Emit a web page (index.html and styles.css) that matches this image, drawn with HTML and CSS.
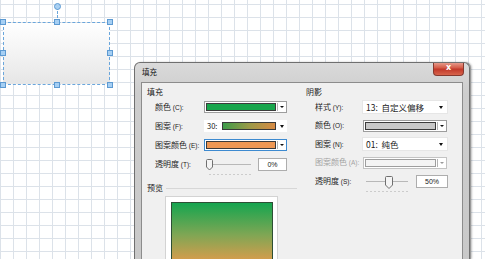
FILE: index.html
```html
<!DOCTYPE html>
<html>
<head>
<meta charset="utf-8">
<link rel="stylesheet" href="styles.css">
</head>
<body>
<div class="shape">
  <div class="rot-line"></div>
  <div class="rot"></div>
  <i class="h h-tl"></i><i class="h h-tm"></i><i class="h h-tr"></i>
  <i class="h h-ml"></i><i class="h h-mr"></i>
  <i class="h h-bl"></i><i class="h h-bm"></i><i class="h h-br"></i>
</div>

<div class="dialog">
  <div class="titlebar">
    <span class="title">填充</span>
    <div class="close">x</div>
  </div>
  <div class="client">
    <div class="col col-left">
      <div class="group">填充</div>
      <div class="rows rows-left">
        <div class="lab">颜色 <span class="key">(C):</span></div>
        <div class="cs"><div class="sw sw-green"></div><div class="dd"><i class="tri"></i></div></div>

        <div class="lab">图案 <span class="key">(F):</span></div>
        <div class="cp"><span class="num">30:</span><div class="sw sw-grad"></div><div class="dd2"><i class="tri"></i></div></div>

        <div class="lab">图案颜色 <span class="key">(E):</span></div>
        <div class="cs focus"><div class="sw sw-orange"></div><div class="dd"><i class="tri"></i></div></div>

        <div class="lab">透明度 <span class="key">(T):</span></div>
        <div class="slide-row">
          <svg class="slider" width="46" height="17" viewBox="0 0 46 17">
            <line x1="3" y1="5.5" x2="45" y2="5.5" stroke="#b8b8b8" stroke-width="1"/>
            <path d="M0.5 1.5 Q0.5 0.5 1.5 0.5 H5.5 Q6.5 0.5 6.5 1.5 V8 L3.5 11 L0.5 8 Z" fill="#f4f4f4" stroke="#6f6f6f"/>
            <path d="M3.5 15.5 H45" stroke="#a8a8a8" stroke-dasharray="1 3"/>
          </svg>
          <div class="tb">0%</div>
        </div>
      </div>
      <div class="sect"><span>预览</span><div class="rule"></div></div>
      <div class="preview"><div class="pv"></div></div>
    </div>

    <div class="col col-right">
      <div class="group">阴影</div>
      <div class="rows rows-right">
        <div class="lab">样式 <span class="key">(Y):</span></div>
        <div class="ct"><span>13:&nbsp; 自定义偏移</span><i class="tri"></i></div>

        <div class="lab">颜色 <span class="key">(O):</span></div>
        <div class="cs inset"><div class="sw sw-gray"></div><div class="dd"><i class="tri"></i></div></div>

        <div class="lab">图案 <span class="key">(N):</span></div>
        <div class="ct"><span>01:&nbsp; 纯色</span><i class="tri"></i></div>

        <div class="lab dis">图案颜色 <span class="key">(A):</span></div>
        <div class="cs inset disabled"><div class="sw sw-dis"></div><div class="dd"><i class="tri"></i></div></div>

        <div class="lab">透明度 <span class="key">(S):</span></div>
        <div class="slide-row">
          <svg class="slider" width="48" height="19" viewBox="0 0 48 19">
            <line x1="4" y1="5.5" x2="46" y2="5.5" stroke="#b8b8b8" stroke-width="1"/>
            <path d="M23.5 1.5 Q23.5 0.5 24.5 0.5 H29.5 Q30.5 0.5 30.5 1.5 V9 L27 12.5 L23.5 9 Z" fill="#f4f4f4" stroke="#6f6f6f"/>
            <path d="M4.5 15.5 H46" stroke="#a8a8a8" stroke-dasharray="1 3"/>
          </svg>
          <div class="tb">50%</div>
        </div>
      </div>
    </div>
  </div>
</div>
</body>
</html>
```
FILE: styles.css
```css
html, body {
  margin: 0;
  padding: 0;
}
body {
  width: 485px;
  height: 259px;
  overflow: hidden;
  position: relative;
  font-family: "Noto Sans CJK SC", "Noto Sans", sans-serif;
  font-size: 8px;
  color: #1a1a1a;
  background-color: #ffffff;
  background-image:
    linear-gradient(to right, #dce2e9 1px, transparent 1px),
    linear-gradient(to bottom, #dce2e9 1px, transparent 1px);
  background-size: 13px 13px;
  background-position: 0 4px;
}

/* ---------- shape on canvas ---------- */
.shape {
  position: absolute;
  left: 3px;
  top: 22px;
  width: 107px;
  height: 63px;
  box-sizing: border-box;
  border: 1px dashed #6aa6dc;
  background: linear-gradient(#ffffff, #f3f3f3 50%, #e6e6e6);
}
.rot-line {
  position: absolute;
  left: 53px;
  top: -16px;
  height: 15px;
  border-left: 1px dashed #6aa6dc;
}
.rot {
  position: absolute;
  left: 50px;
  top: -20px;
  width: 5px;
  height: 5px;
  border-radius: 50%;
  background: #a9d0f2;
  border: 1px solid #5e9bd3;
}
.h {
  position: absolute;
  width: 4px;
  height: 4px;
  background: #a6cff3;
  border: 1px solid #5d9ad2;
}
.h-tl { left: -4px; top: -4px; }
.h-tm { left: 50px; top: -4px; }
.h-tr { right: -4px; top: -4px; }
.h-ml { left: -4px; top: 27px; }
.h-mr { right: -4px; top: 27px; }
.h-bl { left: -4px; bottom: -4px; }
.h-bm { left: 50px; bottom: -4px; }
.h-br { right: -4px; bottom: -4px; }

/* ---------- dialog window ---------- */
.dialog {
  position: absolute;
  left: 134px;
  top: 62px;
  width: 336px;
  height: 197px;
  box-sizing: border-box;
  border: 1px solid #6f6f6f;
  border-bottom: none;
  border-radius: 6px 6px 0 0;
  background: linear-gradient(#dadada, #cdcdcd 30px, #c9c9c9);
  padding: 0 6px;
  display: flex;
  flex-direction: column;
  box-shadow: 1px 0 0 #9a9a9a, 2px 0 2px rgba(0,0,0,0.25);
  overflow: hidden;
}
.titlebar {
  height: 19px;
  display: flex;
  align-items: center;
  justify-content: space-between;
  flex: none;
}
.title {
  font-size: 7.5px;
  line-height: 10px;
  color: #111;
  margin-left: 1px;
  margin-top: -1px;
}
.close {
  align-self: flex-start;
  margin-top: -1px;
  margin-right: -1px;
  width: 31px;
  height: 14px;
  box-sizing: border-box;
  border: 1px solid #86392f;
  border-top: none;
  border-radius: 0 0 4px 4px;
  background: linear-gradient(#e9a597, #d45b47 45%, #c1382a 55%, #d7644c);
  color: #fff;
  font-family: "DejaVu Sans", sans-serif;
  font-weight: bold;
  font-size: 8px;
  line-height: 12px;
  text-align: center;
}
.client {
  flex: 1;
  min-height: 0;
  display: flex;
  background: #f0f0f0;
  border: 1px solid #8c8c8c;
  border-bottom: none;
  overflow: hidden;
}

.col {
  display: flex;
  flex-direction: column;
  padding-top: 3px;
}
.col-left {
  width: 158px;
  padding-left: 5px;
  padding-right: 3px;
  box-sizing: border-box;
}
.col-right {
  flex: 1;
  padding-left: 6px;
}
.group {
  font-size: 8px;
  line-height: 12px;
  height: 12px;
}
.rows {
  display: grid;
  grid-auto-rows: 12px;
  align-items: center;
}
.rows-left {
  margin-top: 3px;
  margin-left: 8px;
  grid-template-columns: 49px 83px;
  row-gap: 7px;
}
.rows-right {
  margin-top: 3px;
  margin-left: 9px;
  grid-template-columns: 47px 86px;
  row-gap: 6.5px;
}
.lab {
  font-size: 8px;
  line-height: 12px;
  white-space: nowrap;
  color: #1c1c1c;
}
.lab .key {
  font-family: "Liberation Sans", sans-serif;
  font-size: 6.5px;
}
.lab.dis {
  color: #a3a3a3;
}

/* swatch combo */
.cs {
  height: 12px;
  box-sizing: border-box;
  display: flex;
  border: 1px solid #9d9d9d;
  background: #ffffff;
  padding: 1px;
  gap: 1px;
}
.cs.inset {
  margin: 0 1px;
}
.cs .sw {
  flex: 1;
  border: 1px solid #3b3b3b;
}
.cs .dd {
  width: 7px;
  border-left: 1px solid #b3b3b3;
  display: flex;
  align-items: center;
  justify-content: center;
}
.cs.focus {
  border-color: #3d8ad0;
}
.cs.disabled {
  border-color: #c3c3c3;
}
.cs.disabled .sw {
  border-color: #9e9e9e;
}
.cs.disabled .tri {
  border-top-color: #9a9a9a;
}
.sw-green { background: #19a64d; }
.sw-orange { background: #ef9753; }
.sw-gray { background: #c8c8c8; }
.sw-dis { background: #f4f4f4; }

.tri {
  display: block;
  width: 0;
  height: 0;
  border-left: 2px solid transparent;
  border-right: 2px solid transparent;
  border-top: 2.5px solid #111;
}

/* pattern combo */
.cp {
  height: 12px;
  box-sizing: border-box;
  display: flex;
  align-items: center;
  background: #ffffff;
  padding-left: 3px;
}
.cp .num {
  font-size: 7.5px;
  line-height: 12px;
  width: 15px;
}
.cp .sw {
  width: 54px;
  height: 8px;
  box-sizing: border-box;
  border: 1px solid #3a3a3a;
}
.sw-grad {
  background: linear-gradient(100deg, #3c9d4b, #9b9a48 50%, #d98b45);
}
.dd2 {
  flex: 1;
  display: flex;
  justify-content: center;
}
.dd2 .tri {
  border-left-width: 2.5px;
  border-right-width: 2.5px;
  border-top-width: 3px;
}

/* text combo */
.ct {
  height: 14px;
  box-sizing: border-box;
  display: flex;
  align-items: center;
  justify-content: space-between;
  background: #ffffff;
  border: 1px solid #e6e6e6;
  padding: 0 4px 0 3px;
  font-size: 8.5px;
  line-height: 12px;
}
.ct .tri {
  border-left-width: 2.5px;
  border-right-width: 2.5px;
  border-top-width: 3px;
}

/* slider + textbox */
.slide-row {
  display: flex;
  align-items: flex-start;
  gap: 6px;
  height: 12px;
}
.slider {
  display: block;
  flex: none;
  margin-top: 1px;
  overflow: visible;
}
.rows-left .slider {
  margin-left: 2px;
}
.tb {
  width: 32px;
  height: 13px;
  box-sizing: border-box;
  background: #ffffff;
  border: 1px solid #adadad;
  font-family: "Liberation Sans", sans-serif;
  font-size: 7px;
  line-height: 11px;
  text-align: center;
  color: #222;
}

/* preview */
.sect {
  display: flex;
  align-items: center;
  margin-top: 12px;
  height: 12px;
  font-size: 8px;
  line-height: 12px;
}
.rule {
  flex: 1;
  margin-left: 3px;
  border-top: 1px solid #d7d7d7;
}
.preview {
  flex: none;
  margin-top: 2px;
  margin-left: 18px;
  width: 113px;
  height: 80px;
  box-sizing: border-box;
  background: #ffffff;
  border: 1px solid #d3d3d3;
  padding: 5px 4px 0 5px;
}
.pv {
  height: 70px;
  border: 1px solid #2d4f35;
  background: linear-gradient(#15a54f, #7ea654 45%, #e49b4b 88%, #e89a4a);
}
```
